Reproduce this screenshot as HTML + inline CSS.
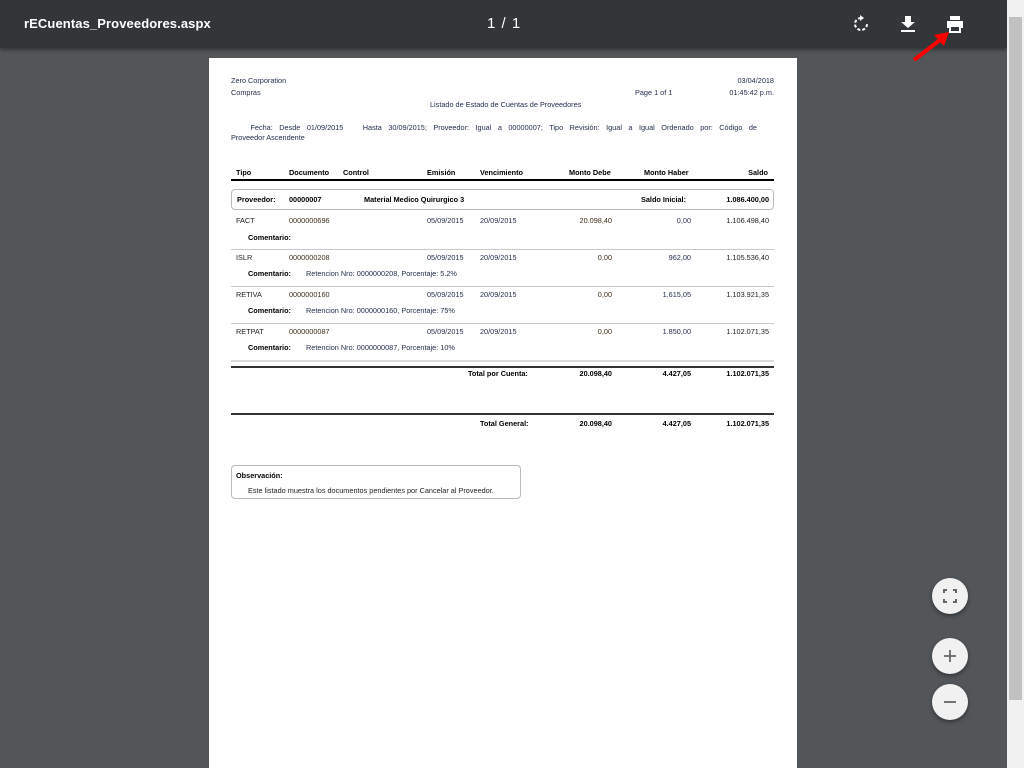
<!DOCTYPE html>
<html><head><meta charset="utf-8"><style>
*{margin:0;padding:0;box-sizing:border-box}
html,body{width:1024px;height:768px;overflow:hidden}
body{background:#525659;font-family:"Liberation Sans",sans-serif;position:relative}
#bar{position:absolute;left:0;top:0;width:1007px;height:48px;background:#323639;box-shadow:0 2px 4px rgba(0,0,0,.4)}
#title{position:absolute;left:24px;top:16px;color:#fff;font-size:13px;font-weight:bold;letter-spacing:0.1px}
#pg{position:absolute;left:487px;top:15px;color:#fff;font-size:15px;letter-spacing:1px}
#sb{position:absolute;left:1007px;top:0;width:17px;height:768px;background:#f1f1f1}
#thumb{position:absolute;left:1009px;top:17px;width:13px;height:683px;background:#c1c1c1}
#page{position:absolute;left:209px;top:58px;width:588px;height:710px;background:#fff}
.t{position:absolute;font-size:7.3px;color:#222;white-space:nowrap;line-height:10px}
.b{font-weight:bold;color:#000}
.r{text-align:right}
.n{color:#1f2a48}
.o{color:#3e2e18}
.line{position:absolute;background:#000}
.gl{position:absolute;background:#c8c8c8;height:1px}
.box{position:absolute;border:1px solid #bbb;border-radius:4px}
.fab{position:absolute;width:36px;height:36px;border-radius:50%;background:#f1f1f1;box-shadow:0 2px 4px rgba(0,0,0,.4)}
</style></head><body>
<div id="bar">
<div id="title">rECuentas_Proveedores.aspx</div>
<div id="pg">1 / 1</div>
<svg style="position:absolute;left:851px;top:14px" width="20" height="20" viewBox="0 0 20 20"><path d="M10 4 A6 6 0 1 0 16 10" fill="none" stroke="#fff" stroke-width="2" stroke-dasharray="3 2"/><path d="M9 1 L13 4 L9 7 Z" fill="#fff"/></svg>
<svg style="position:absolute;left:899px;top:14px" width="18" height="20" viewBox="0 0 18 20"><path d="M6 2 H12 V8 H16 L9 14 L2 8 H6 Z" fill="#fff"/><rect x="2" y="16" width="14" height="2" fill="#fff"/></svg>
<svg style="position:absolute;left:945px;top:14px" width="20" height="20" viewBox="0 0 20 20"><rect x="5" y="2" width="10" height="4" fill="#fff"/><path d="M2 7 H18 V14 H15 V11 H5 V14 H2 Z" fill="#fff"/><rect x="5" y="12" width="10" height="6" fill="none" stroke="#fff" stroke-width="2"/></svg>
</div>
<svg style="position:absolute;left:910px;top:28px" width="45" height="37" viewBox="0 0 45 37"><path d="M4 32 L30 12" stroke="#f00" stroke-width="4"/><path d="M39 4 L24 7 L34 18 Z" fill="#f00"/></svg>
<div id="sb"></div><div id="thumb"></div>
<div id="page">
<div class="t n" style="left:22px;top:18px">Zero Corporation</div>
<div class="t n" style="left:22px;top:30px">Compras</div>
<div class="t n r" style="right:23px;top:18px">03/04/2018</div>
<div class="t n r" style="right:23px;top:30px">01:45:42 p.m.</div>
<div class="t n" style="left:426px;top:30px">Page 1 of 1</div>
<div class="t n" style="left:221px;top:42px">Listado de Estado de Cuentas de Proveedores</div>
<div class="t n" style="left:22px;top:65px;width:526px;white-space:normal;text-align:justify;text-align-last:justify">&nbsp;&nbsp;&nbsp;Fecha: Desde 01/09/2015 &nbsp;&nbsp;Hasta 30/09/2015; Proveedor: Igual a 00000007; Tipo Revisión: Igual a Igual Ordenado por: Código de</div>
<div class="t n" style="left:22px;top:75px">Proveedor Ascendente</div>
<div class="t b" style="left:27px;top:110px">Tipo</div>
<div class="t b" style="left:80px;top:110px">Documento</div>
<div class="t b" style="left:134px;top:110px">Control</div>
<div class="t b" style="left:218px;top:110px">Emisión</div>
<div class="t b" style="left:271px;top:110px">Vencimiento</div>
<div class="t b" style="left:360px;top:110px">Monto Debe</div>
<div class="t b" style="left:435px;top:110px">Monto Haber</div>
<div class="t b r" style="right:29px;top:110px">Saldo</div>
<div class="line" style="left:22px;top:121px;width:543px;height:2px"></div>
<div class="box" style="left:22px;top:131px;width:543px;height:21px"></div>
<div class="t b" style="left:28px;top:137px">Proveedor:</div>
<div class="t b" style="left:80px;top:137px">00000007</div>
<div class="t b" style="left:155px;top:137px">Material Medico Quirurgico 3</div>
<div class="t b" style="left:432px;top:137px">Saldo Inicial:</div>
<div class="t b r" style="right:28px;top:137px">1.086.400,00</div>

<div class="t" style="left:27px;top:158px">FACT</div><div class="t o" style="left:80px;top:158px">0000000696</div><div class="t n" style="left:218px;top:158px">05/09/2015</div><div class="t n" style="left:271px;top:158px">20/09/2015</div><div class="t o r" style="right:185px;top:158px">20.098,40</div><div class="t n r" style="right:106px;top:158px">0,00</div><div class="t r" style="right:28px;top:158px">1.106.498,40</div>
<div class="t b" style="left:39px;top:175px">Comentario:</div>
<div class="gl" style="left:22px;top:191px;width:543px"></div>

<div class="t" style="left:27px;top:195px">ISLR</div><div class="t o" style="left:80px;top:195px">0000000208</div><div class="t n" style="left:218px;top:195px">05/09/2015</div><div class="t n" style="left:271px;top:195px">20/09/2015</div><div class="t o r" style="right:185px;top:195px">0,00</div><div class="t n r" style="right:106px;top:195px">962,00</div><div class="t r" style="right:28px;top:195px">1.105.536,40</div>
<div class="t b" style="left:39px;top:211px">Comentario:</div><div class="t n" style="left:97px;top:211px">Retencion Nro: 0000000208, Porcentaje: 5.2%</div>
<div class="gl" style="left:22px;top:228px;width:543px"></div>

<div class="t" style="left:27px;top:232px">RETIVA</div><div class="t o" style="left:80px;top:232px">0000000160</div><div class="t n" style="left:218px;top:232px">05/09/2015</div><div class="t n" style="left:271px;top:232px">20/09/2015</div><div class="t o r" style="right:185px;top:232px">0,00</div><div class="t n r" style="right:106px;top:232px">1.615,05</div><div class="t r" style="right:28px;top:232px">1.103.921,35</div>
<div class="t b" style="left:39px;top:248px">Comentario:</div><div class="t n" style="left:97px;top:248px">Retencion Nro: 0000000160, Porcentaje: 75%</div>
<div class="gl" style="left:22px;top:265px;width:543px"></div>

<div class="t" style="left:27px;top:269px">RETPAT</div><div class="t o" style="left:80px;top:269px">0000000087</div><div class="t n" style="left:218px;top:269px">05/09/2015</div><div class="t n" style="left:271px;top:269px">20/09/2015</div><div class="t o r" style="right:185px;top:269px">0,00</div><div class="t n r" style="right:106px;top:269px">1.850,00</div><div class="t r" style="right:28px;top:269px">1.102.071,35</div>
<div class="t b" style="left:39px;top:285px">Comentario:</div><div class="t n" style="left:97px;top:285px">Retencion Nro: 0000000087, Porcentaje: 10%</div>
<div class="gl" style="left:22px;top:302px;width:543px;height:2px;background:#ddd"></div>

<div class="line" style="left:22px;top:308px;width:543px;height:2px;background:#333"></div>
<div class="t b" style="left:259px;top:311px">Total por Cuenta:</div>
<div class="t b r" style="right:185px;top:311px">20.098,40</div><div class="t b r" style="right:106px;top:311px">4.427,05</div><div class="t b r" style="right:28px;top:311px">1.102.071,35</div>
<div class="line" style="left:22px;top:355px;width:543px;height:2px;background:#333"></div>
<div class="t b" style="left:271px;top:361px">Total General:</div>
<div class="t b r" style="right:185px;top:361px">20.098,40</div><div class="t b r" style="right:106px;top:361px">4.427,05</div><div class="t b r" style="right:28px;top:361px">1.102.071,35</div>

<div class="box" style="left:22px;top:407px;width:290px;height:34px"></div>
<div class="t b" style="left:27px;top:413px">Observación:</div>
<div class="t" style="left:39px;top:428px">Este listado muestra los documentos pendientes por Cancelar al Proveedor.</div>
</div>
<div class="fab" style="left:932px;top:578px"><svg width="36" height="36" viewBox="0 0 36 36"><path d="M12 15V12H15M21 12H24V15M24 21V24H21M15 24H12V21" fill="none" stroke="#666" stroke-width="2"/></svg></div>
<div class="fab" style="left:932px;top:638px"><svg width="36" height="36" viewBox="0 0 36 36"><path d="M18 12V24M12 18H24" stroke="#666" stroke-width="1.8"/></svg></div>
<div class="fab" style="left:932px;top:684px"><svg width="36" height="36" viewBox="0 0 36 36"><path d="M12 18H24" stroke="#666" stroke-width="1.8"/></svg></div>
</body></html>
